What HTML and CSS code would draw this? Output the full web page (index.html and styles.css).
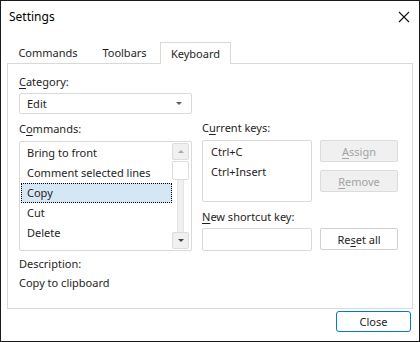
FILE: index.html
```html
<!DOCTYPE html>
<html lang="en">
<head>
  <meta charset="UTF-8" />
  <title>Settings</title>
  <link rel="stylesheet" href="styles.css">
</head>
<body>
  <div class="window">

    <div class="titlebar">
      <span class="title">Settings</span>
      <svg class="close-x" width="12" height="12" viewBox="0 0 12 12">
        <path d="M1 1 L11 11 M11 1 L1 11" stroke="#111" stroke-width="1.1" fill="none" />
      </svg>
    </div>

    <div class="tabs">
      <div class="tab tab-commands">Commands</div>
      <div class="tab tab-toolbars">Toolbars</div>
      <div class="tab tab-keyboard active">Keyboard</div>
      <div class="tab-fill"></div>
    </div>

    <div class="panel">
      <div class="columns">
        <!-- left column: category + commands -->
        <div class="col-left">
          <div class="label"><u>C</u>ategory:</div>
          <div class="select">
            <span>Edit</span>
            <span class="caret"></span>
          </div>
          <div class="label label-gap">C<u>o</u>mmands:</div>
          <div class="listbox">
            <ul class="items">
              <li>Bring to front</li>
              <li>Comment selected lines</li>
              <li class="selected">Copy</li>
              <li>Cut</li>
              <li>Delete</li>
            </ul>
            <div class="scrollbar">
              <div class="sb-btn"><span class="arrow-up"></span></div>
              <div class="sb-thumb"></div>
              <div class="sb-track"></div>
              <div class="sb-btn"><span class="arrow-down"></span></div>
            </div>
          </div>
        </div>

        <!-- right column: keys -->
        <div class="col-right">
          <div class="label label-gap">C<u>u</u>rrent keys:</div>
          <div class="keys-row">
            <ul class="keys">
              <li>Ctrl+C</li>
              <li>Ctrl+Insert</li>
            </ul>
            <div class="key-buttons">
              <button type="button" class="btn" disabled><u>A</u>ssign</button>
              <button type="button" class="btn" disabled><u>R</u>emove</button>
            </div>
          </div>
          <div class="label label-new"><u>N</u>ew shortcut key:</div>
          <div class="keys-row">
            <input type="text" class="shortcut" />
            <button type="button" class="btn">Re<u>s</u>et all</button>
          </div>
        </div>
      </div>

      <div class="desc-label">Description:</div>
      <div class="desc-text">Copy to clipboard</div>
    </div>

    <div class="footer">
      <button type="button" class="btn btn-default">Close</button>
    </div>
  </div>
</body>
</html>
```

FILE: styles.css
```css
* {
  box-sizing: border-box;
}
body {
  margin: 0;
  font-family: "Noto Sans", "Open Sans", sans-serif;
  font-size: 11px;
  color: #1e1e1e;
  background: #fff;
}
u {
  text-decoration-thickness: 1px;
  text-underline-offset: 2px;
}
.window {
  width: 420px;
  height: 342px;
  border: 1px solid #1a1a1a;
  background: #fff;
  display: flex;
  flex-direction: column;
}
/* Title bar */
.titlebar {
  height: 31px;
  display: flex;
  align-items: center;
  justify-content: space-between;
  padding: 0 9px 0 8px;
}
.title {
  font-size: 12px;
  color: #000;
}
/* Tabs */
.tabs {
  display: flex;
  margin: 10px 6px 0;
  height: 22px;
}
.tab {
  text-align: center;
  line-height: 22px;
  border-bottom: 1px solid #d9d9d9;
}
.tab-commands {
  width: 82px;
}
.tab-toolbars {
  width: 71px;
}
.tab-keyboard {
  width: 71px;
}
.tab.active {
  border: 1px solid #d9d9d9;
  border-bottom: none;
  line-height: 21px;
}
.tab-fill {
  flex: 1;
  border-bottom: 1px solid #d9d9d9;
}
/* Panel */
.panel {
  margin: 0 6px;
  height: 245px;
  border: 1px solid #d9d9d9;
  border-top: none;
  padding: 8px 11px 0;
}
.columns {
  display: flex;
  gap: 10px;
}
.col-left {
  width: 173px;
}
.col-right {
  flex: 1;
}
.label {
  height: 20px;
  line-height: 20px;
}
.label-gap {
  margin-top: 5px;
  margin-bottom: 2px;
}
.col-right .label-gap {
  margin-top: 46px;
}
.label-new {
  margin-top: 5px;
  margin-bottom: 1px;
}
.select {
  height: 21px;
  margin-top: 1px;
  border: 1px solid #d9d9d9;
  border-radius: 2px;
  display: flex;
  align-items: center;
  justify-content: space-between;
  padding: 0 9px 0 7px;
}
.caret {
  width: 0;
  height: 0;
  border-left: 3px solid transparent;
  border-right: 3px solid transparent;
  border-top: 3px solid #606060;
}
/* List box */
.listbox {
  height: 110px;
  border: 1px solid #d9d9d9;
  border-radius: 2px;
  padding: 1px;
  display: flex;
  overflow: hidden;
}
.items {
  list-style: none;
  margin: 0;
  padding: 0;
  flex: 1;
  overflow: hidden;
}
.items li {
  height: 20px;
  line-height: 19px;
  padding-left: 6px;
  white-space: nowrap;
}
.items li.selected {
  background: #d5e6f5;
  outline: 1px dotted #000;
  outline-offset: -1px;
}
.scrollbar {
  width: 17px;
  margin-right: 1px;
  display: flex;
  flex-direction: column;
  align-items: center;
}
.sb-btn {
  width: 17px;
  height: 17px;
  background: #f0f0f0;
  border: 1px solid #dcdcdc;
  border-radius: 2px;
  display: flex;
  align-items: center;
  justify-content: center;
}
.arrow-up {
  border-left: 3px solid transparent;
  border-right: 3px solid transparent;
  border-bottom: 3px solid #a8a8a8;
}
.arrow-down {
  border-left: 3px solid transparent;
  border-right: 3px solid transparent;
  border-top: 3px solid #444;
}
.sb-thumb {
  width: 17px;
  height: 19px;
  margin-top: 1px;
  background: #fff;
  border: 1px solid #dcdcdc;
  border-radius: 2px;
}
.sb-track {
  flex: 1;
  width: 7px;
  background: #f0f0f0;
  border-left: 1px solid #e4e4e4;
  border-right: 1px solid #e4e4e4;
}
/* Keys */
.keys-row {
  display: flex;
  gap: 8px;
}
.keys {
  list-style: none;
  margin: 0;
  width: 110px;
  height: 62px;
  border: 1px solid #d9d9d9;
  border-radius: 2px;
  padding: 1px 0 0 8px;
}
.keys li {
  height: 20px;
  line-height: 20px;
}
.key-buttons {
  display: flex;
  flex-direction: column;
  gap: 8px;
}
.btn {
  width: 78px;
  height: 22px;
  font-family: inherit;
  font-size: 11px;
  color: #1e1e1e;
  background: #fff;
  border: 1px solid #d0d0d0;
  border-radius: 2px;
  padding: 0;
}
.btn:disabled {
  background: #f0f0f0;
  color: #a3a3a3;
  border-color: #dcdcdc;
}
.shortcut {
  width: 110px;
  height: 23px;
  border: 1px solid #d9d9d9;
  border-radius: 2px;
}
/* Description */
.desc-label {
  margin-top: 3px;
  line-height: 19px;
}
.desc-text {
  line-height: 19px;
}
/* Footer */
.footer {
  display: flex;
  justify-content: flex-end;
  padding: 2px 8px 0 0;
}
.btn-default {
  width: 75px;
  height: 21px;
  border-color: #0078d7;
  border-radius: 3px;
}
```
